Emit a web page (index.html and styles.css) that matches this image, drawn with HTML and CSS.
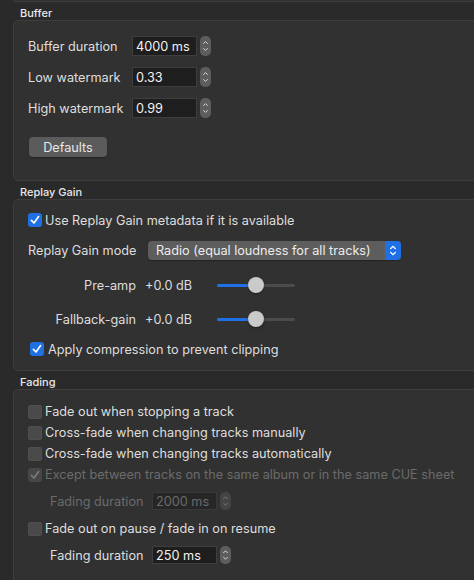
FILE: index.html
```html
<!DOCTYPE html>
<html lang="en">
<head>
    <meta charset="UTF-8">
    <meta name="viewport" content="width=device-width, initial-scale=1.0">
    <title>Playback settings</title>
    <link rel="stylesheet" href="styles.css">
</head>
<body>
    <div class="group-tail"></div>

    <!-- Buffer -->
    <section class="group">
        <div class="group-title">Buffer</div>
        <div class="group-box buffer-box">
            <div class="field-grid">
                <span class="label">Buffer duration</span>
                <div class="spin">
                    <span class="field">4000 ms</span>
                    <svg class="stepper" width="11" height="20" viewBox="0 0 11 20"><rect x="0" y="0" width="11" height="20" rx="5" fill="#5d5d5d"/><path d="M3.3 7.8 L5.5 5.6 L7.7 7.8 M3.3 12.2 L5.5 14.4 L7.7 12.2" stroke="#d8d8d8" stroke-width="1" fill="none"/></svg>
                </div>
                <span class="label">Low watermark</span>
                <div class="spin">
                    <span class="field">0.33</span>
                    <svg class="stepper" width="11" height="20" viewBox="0 0 11 20"><rect x="0" y="0" width="11" height="20" rx="5" fill="#5d5d5d"/><path d="M3.3 7.8 L5.5 5.6 L7.7 7.8 M3.3 12.2 L5.5 14.4 L7.7 12.2" stroke="#d8d8d8" stroke-width="1" fill="none"/></svg>
                </div>
                <span class="label">High watermark</span>
                <div class="spin">
                    <span class="field">0.99</span>
                    <svg class="stepper" width="11" height="20" viewBox="0 0 11 20"><rect x="0" y="0" width="11" height="20" rx="5" fill="#5d5d5d"/><path d="M3.3 7.8 L5.5 5.6 L7.7 7.8 M3.3 12.2 L5.5 14.4 L7.7 12.2" stroke="#d8d8d8" stroke-width="1" fill="none"/></svg>
                </div>
            </div>
            <button class="btn">Defaults</button>
        </div>
    </section>

    <!-- Replay Gain -->
    <section class="group">
        <div class="group-title">Replay Gain</div>
        <div class="group-box replay-box">
            <div class="check-row">
                <svg class="check" width="14" height="14" viewBox="0 0 14 14"><rect width="14" height="14" rx="3" fill="#1f6fe5"/><path d="M3.4 7.3 L6 10 L10.6 3.6" stroke="#fff" stroke-width="1.7" fill="none" stroke-linecap="round" stroke-linejoin="round"/></svg>
                <span>Use Replay Gain metadata if it is available</span>
            </div>
            <div class="mode-row">
                <span class="label">Replay Gain mode</span>
                <div class="popup">
                    <span class="popup-text">Radio (equal loudness for all tracks)</span>
                    <svg class="popup-arrows" width="16" height="19" viewBox="0 0 16 19"><path d="M5.3 8 L8 5.3 L10.7 8 M5.3 11 L8 13.7 L10.7 11" stroke="#fff" stroke-width="1.2" fill="none"/></svg>
                </div>
            </div>
            <div class="gain-row preamp">
                <span class="gain-label">Pre-amp</span>
                <span class="gain-value">+0.0 dB</span>
                <div class="slider"><div class="slider-fill" style="width: 39px"></div><div class="knob"></div></div>
            </div>
            <div class="gain-row fallback">
                <span class="gain-label">Fallback-gain</span>
                <span class="gain-value">+0.0 dB</span>
                <div class="slider"><div class="slider-fill" style="width: 39px"></div><div class="knob"></div></div>
            </div>
            <div class="check-row apply">
                <svg class="check" width="14" height="14" viewBox="0 0 14 14"><rect width="14" height="14" rx="3" fill="#1f6fe5"/><path d="M3.4 7.3 L6 10 L10.6 3.6" stroke="#fff" stroke-width="1.7" fill="none" stroke-linecap="round" stroke-linejoin="round"/></svg>
                <span class="apply-text">Apply compression to prevent clipping</span>
            </div>
        </div>
    </section>

    <!-- Fading -->
    <section class="group">
        <div class="group-title">Fading</div>
        <div class="group-box fading-box">
            <div class="check-row fade-row">
                <span class="box-off"></span>
                <span>Fade out when stopping a track</span>
            </div>
            <div class="check-row fade-row">
                <span class="box-off"></span>
                <span>Cross-fade when changing tracks manually</span>
            </div>
            <div class="check-row fade-row">
                <span class="box-off"></span>
                <span>Cross-fade when changing tracks automatically</span>
            </div>
            <div class="check-row fade-row disabled">
                <svg class="check" width="14" height="14" viewBox="0 0 14 14"><rect width="14" height="14" rx="3" fill="#474747"/><path d="M3.4 7.3 L6 10 L10.6 3.6" stroke="#7a7a7a" stroke-width="1.7" fill="none" stroke-linecap="round" stroke-linejoin="round"/></svg>
                <span>Except between tracks on the same album or in the same CUE sheet</span>
            </div>
            <div class="duration-row disabled first-duration">
                <span class="label">Fading duration</span>
                <div class="spin">
                    <span class="field small">2000 ms</span>
                    <svg class="stepper" width="11" height="18" viewBox="0 0 11 18"><rect x="0" y="0" width="11" height="18" rx="5" fill="#444"/><path d="M3.3 7 L5.5 4.8 L7.7 7 M3.3 11 L5.5 13.2 L7.7 11" stroke="#777" stroke-width="1" fill="none"/></svg>
                </div>
            </div>
            <div class="check-row fade-row pause-row">
                <span class="box-off"></span>
                <span>Fade out on pause / fade in on resume</span>
            </div>
            <div class="duration-row last-duration">
                <span class="label">Fading duration</span>
                <div class="spin">
                    <span class="field small">250 ms</span>
                    <svg class="stepper" width="11" height="18" viewBox="0 0 11 18"><rect x="0" y="0" width="11" height="18" rx="5" fill="#5d5d5d"/><path d="M3.3 7 L5.5 4.8 L7.7 7 M3.3 11 L5.5 13.2 L7.7 11" stroke="#d8d8d8" stroke-width="1" fill="none"/></svg>
                </div>
            </div>
        </div>
    </section>
</body>
</html>
```

FILE: styles.css
```css
body {
    margin: 0;
    padding: 0;
    background-color: #2a2a2a;
    color: #dedede;
    font-family: Inter, "Noto Sans", sans-serif;
    font-size: 12.7px;
    overflow: hidden;
    height: 580px;
}

.group-tail {
    margin-left: 13px;
    margin-right: -10px;
    height: 1px;
    background-color: #313131;
    border: 1px solid #3d3d3d;
    border-top: none;
    border-radius: 0 0 5px 5px;
}

.group {
    margin-left: 13px;
    margin-right: -10px;
}

.group-title {
    height: 18px;
    line-height: 22px;
    padding-left: 7px;
    font-size: 11px;
    font-weight: 500;
    color: #e8e8e8;
}

.group-box {
    background-color: #313131;
    border: 1px solid #3d3d3d;
    border-radius: 5px;
    padding-left: 14px;
}

/* Buffer */
.buffer-box {
    padding-top: 15px;
    padding-bottom: 23px;
}

.field-grid {
    display: grid;
    grid-template-columns: 104px auto;
    row-gap: 11px;
    align-items: center;
}

.spin {
    display: flex;
    align-items: center;
    gap: 3px;
}

.field {
    width: 60px;
    height: 18px;
    line-height: 19px;
    padding-left: 3px;
    background-color: #1e1e1e;
    border: 1px solid #3e3e3e;
    color: #f2f2f2;
}

.field.small {
    height: 16px;
    line-height: 17px;
}

.stepper {
    display: block;
}

.btn {
    display: block;
    margin-top: 19px;
    margin-left: 1px;
    width: 78px;
    height: 20px;
    padding: 0;
    border: none;
    border-radius: 4px;
    background-color: #5b5b5b;
    color: #e6e6e6;
    font-family: inherit;
    font-size: 12.7px;
    box-shadow: 0 1px 1px rgba(0, 0, 0, 0.3);
}

/* Replay gain */
.replay-box {
    padding-top: 12px;
    padding-bottom: 13px;
}

.check-row {
    display: flex;
    align-items: center;
    gap: 3px;
    height: 16px;
}

.check {
    display: block;
    flex: none;
}

.mode-row {
    display: flex;
    align-items: center;
    height: 20px;
    margin-top: 12px;
}

.mode-row .label {
    width: 120px;
}

.popup {
    display: flex;
    align-items: center;
    width: 253px;
    height: 19px;
    border-radius: 4px;
    background-color: #5d5d5d;
    box-shadow: 0 1px 1px rgba(0, 0, 0, 0.3);
    overflow: hidden;
}

.popup-text {
    flex: 1;
    padding-left: 8px;
    color: #ececec;
}

.popup-arrows {
    display: block;
    background-color: #1f6fe5;
}

.gain-row {
    display: flex;
    align-items: center;
    height: 20px;
}

.preamp {
    margin-top: 15px;
}

.fallback {
    margin-top: 14px;
}

.gain-label {
    width: 108px;
    text-align: right;
}

.gain-value {
    width: 72px;
    margin-left: 9px;
}

.slider {
    position: relative;
    width: 78px;
    height: 3px;
    border-radius: 2px;
    background-color: #4c4c4c;
}

.slider-fill {
    height: 3px;
    border-radius: 2px;
    background-color: #1f6fe5;
}

.knob {
    position: absolute;
    left: 31px;
    top: -6.5px;
    width: 16px;
    height: 16px;
    border-radius: 50%;
    background-color: #cacaca;
    box-shadow: 0 1px 2px rgba(0, 0, 0, 0.4);
}

.apply {
    margin-top: 12px;
    padding-left: 2px;
}

.apply-text {
    margin-left: 1px;
}

/* Fading */
.fading-box {
    padding-top: 11px;
    padding-bottom: 20px;
}

.fade-row {
    height: 21px;
}

.box-off {
    flex: none;
    width: 14px;
    height: 14px;
    border-radius: 3px;
    background-color: #4a4a4a;
    box-shadow: inset 0 0 0 0.5px #555;
}

.disabled {
    color: #6b6b6b;
}

.disabled .field {
    color: #6b6b6b;
    background-color: #262626;
    border-color: #383838;
}

.duration-row {
    display: flex;
    align-items: center;
    padding-left: 22px;
    height: 18px;
}

.duration-row .label {
    width: 102px;
}

.first-duration {
    margin-top: 7px;
}

.pause-row {
    margin-top: 8px;
}

.last-duration {
    margin-top: 7px;
}
```
